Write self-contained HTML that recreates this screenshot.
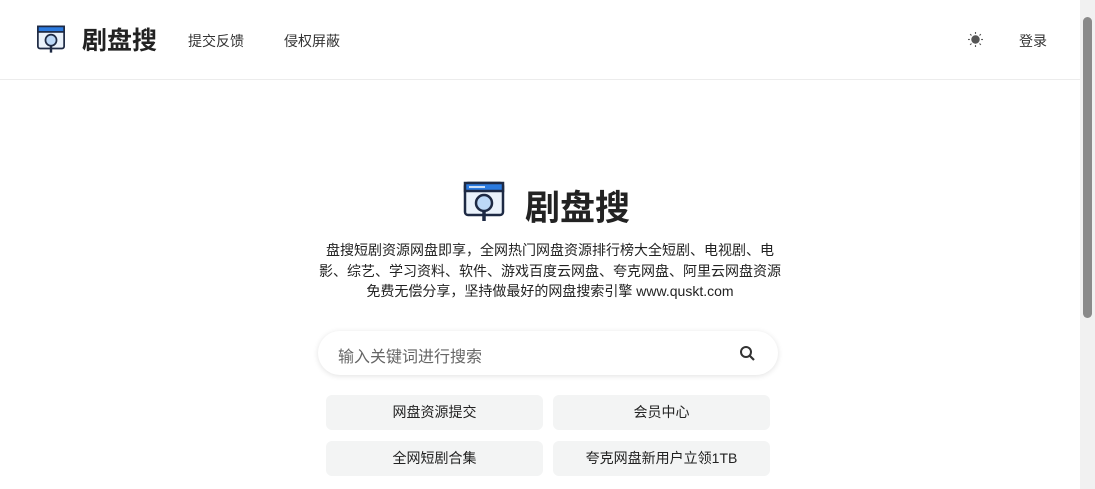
<!DOCTYPE html>
<html><head><meta charset="utf-8"><style>
*{margin:0;padding:0;box-sizing:border-box}
body{width:1095px;height:489px;overflow:hidden;background:#fff;font-family:"Liberation Sans","Noto Sans CJK SC",sans-serif;color:#222;position:relative}
.hdr{position:absolute;left:0;top:0;width:1080px;height:80px;border-bottom:1px solid #ececec}
.t1{position:absolute;left:82px;top:21px;font-size:25px;font-weight:bold;color:#222}
.nav{position:absolute;top:31px;font-size:14px;color:#333}
.sb{position:absolute;right:0;top:0;width:15px;height:489px;background:#f1f1f1}
.sb div{position:absolute;left:3px;top:17px;width:9px;height:301px;background:#8a8a8a;border-radius:5px}
.t2{position:absolute;left:525px;top:180px;font-size:35px;font-weight:bold;color:#222}
.desc{position:absolute;left:315px;top:240px;width:470px;text-align:center;font-size:14px;line-height:20.5px;color:#222}
.search{position:absolute;left:318px;top:331px;width:460px;height:44px;border-radius:22px;box-shadow:0 1px 6px rgba(0,0,0,.12);background:#fff}
.search span{position:absolute;left:20px;top:12px;font-size:16px;color:#666}
.btn{position:absolute;width:217px;height:35px;background:#f3f4f4;border-radius:6px;font-size:14px;text-align:center;line-height:35px;color:#222}
</style></head><body>
<div class="hdr">
<svg style="position:absolute;left:36px;top:25px" width="30" height="29" viewBox="0 0 42 42">
<rect x="2" y="2" width="38" height="32" rx="3" fill="#eaf2fb" stroke="#1e2a44" stroke-width="2.5"/>
<rect x="2" y="2" width="38" height="8" fill="#2b7be0" stroke="#1e2a44" stroke-width="2.5"/>
<circle cx="21" cy="22" r="8" fill="#bcd8f7" stroke="#1e2a44" stroke-width="2.5"/>
<line x1="21" y1="30" x2="21" y2="40" stroke="#1e2a44" stroke-width="3.5"/>
</svg>
<div class="t1">剧盘搜</div>
<div class="nav" style="left:188px">提交反馈</div>
<div class="nav" style="left:284px">侵权屏蔽</div>
<svg style="position:absolute;left:968px;top:32px" width="15" height="15" viewBox="0 0 16 16"><circle cx="8" cy="8" r="4.5" fill="#555"/><g stroke="#555" stroke-width="1.2"><line x1="8" y1="0" x2="8" y2="2"/><line x1="8" y1="14" x2="8" y2="16"/><line x1="0" y1="8" x2="2" y2="8"/><line x1="14" y1="8" x2="16" y2="8"/><line x1="2.3" y1="2.3" x2="3.7" y2="3.7"/><line x1="12.3" y1="12.3" x2="13.7" y2="13.7"/><line x1="2.3" y1="13.7" x2="3.7" y2="12.3"/><line x1="12.3" y1="3.7" x2="13.7" y2="2.3"/></g></svg>
<div class="nav" style="left:1019px">登录</div>
</div>
<svg style="position:absolute;left:463px;top:181px" width="42" height="42" viewBox="0 0 42 42">
<rect x="2" y="2" width="38" height="32" rx="3" fill="#eaf2fb" stroke="#1e2a44" stroke-width="2.5"/>
<rect x="2" y="2" width="38" height="8" fill="#2b7be0" stroke="#1e2a44" stroke-width="2.5"/>
<line x1="6" y1="6" x2="22" y2="6" stroke="#fff" stroke-width="1.5"/>
<circle cx="21" cy="22" r="8" fill="#bcd8f7" stroke="#1e2a44" stroke-width="2.5"/>
<line x1="21" y1="30" x2="21" y2="40" stroke="#1e2a44" stroke-width="3.5"/>
</svg>
<div class="t2">剧盘搜</div>
<div class="desc">盘搜短剧资源网盘即享，全网热门网盘资源排行榜大全短剧、电视剧、电影、综艺、学习资料、软件、游戏百度云网盘、夸克网盘、阿里云网盘资源免费无偿分享，坚持做最好的网盘搜索引擎 www.quskt.com</div>
<div class="search"><span>输入关键词进行搜索</span>
<svg style="position:absolute;left:421px;top:14px" width="17" height="17" viewBox="0 0 17 17"><circle cx="7" cy="7" r="5" fill="none" stroke="#333" stroke-width="2"/><line x1="10.5" y1="10.5" x2="15" y2="15" stroke="#333" stroke-width="2.2"/></svg></div>
<div class="btn" style="left:326px;top:395px">网盘资源提交</div>
<div class="btn" style="left:553px;top:395px">会员中心</div>
<div class="btn" style="left:326px;top:441px">全网短剧合集</div>
<div class="btn" style="left:553px;top:441px">夸克网盘新用户立领1TB</div>
<div class="sb"><div></div></div>
</body></html>
